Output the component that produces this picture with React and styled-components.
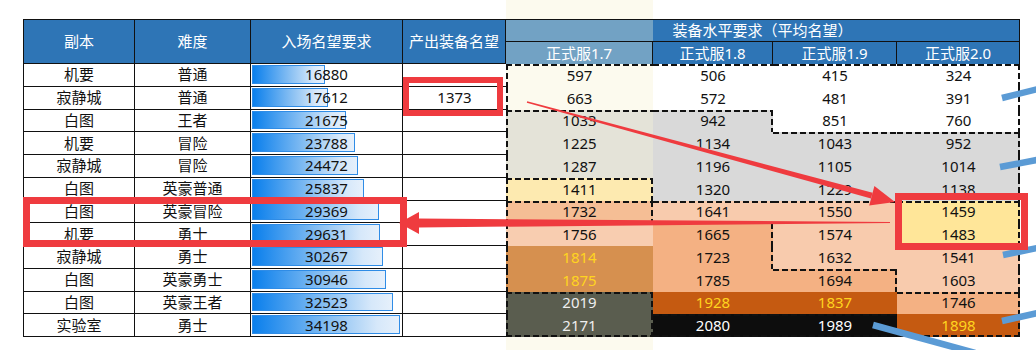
import React from 'react';
import styled, { createGlobalStyle, css } from 'styled-components';

const GlobalStyle = createGlobalStyle`
  body {
    margin: 0;
    background: #fff;
    font-family: "Noto Sans", "Noto Sans CJK SC", sans-serif;
  }
`

const Page = styled.div`
  position: relative;
  width: 1036px;
  height: 350px;
  overflow: hidden;
  background: linear-gradient(90deg, #fff 506px, #fcfaee 506px, #fcfaee 653px, #fff 653px);
`

const Sheet = styled.div`
  display: grid;
  grid-template-columns: 112px 116px 152px 103px 147px 120px 124px 123px;
  grid-template-rows: 23px 22px repeat(12, 22.75px);
  margin: 19px 0 0 23px;
  width: 997px;
  color: #111;
`

const Cell = styled.div`
  box-sizing: border-box;
  display: flex;
  align-items: center;
  justify-content: center;
  font-size: 15px;
  line-height: 1;
  white-space: nowrap;
`

const HeadCell = styled(Cell)`
  grid-row: span 2;
  background: #2e75b6;
  color: #fff;
  border: 1px solid #111;
  border-left-width: ${p => (p.$first ? '1px' : '0')};
`

const GroupHead = styled(Cell)`
  grid-column: span 4;
  color: #fff;
  background: linear-gradient(90deg, #72a2c4 147px, #2e75b6 147px);
  border-top: 1px solid #111;
  border-right: 1px solid #111;
  border-bottom: 1px solid #111;
`

const SubHead = styled(Cell)`
  color: #fff;
  background: ${p => p.$bg};
  border-right: 1px solid #111;
`

const LeftCell = styled(Cell)`
  background: #fff;
  border-bottom: 1px solid #111;
  border-right: ${p => (p.$last ? '0' : '1px solid #111')};
  border-left: ${p => (p.$first ? '1px solid #111' : '0')};
`

const BarCell = styled(LeftCell)`
  display: grid;
  grid-template-columns: 100%;
  grid-template-rows: 100%;
  justify-content: stretch;
  align-items: stretch;
  justify-items: center;
`

const Bar = styled.div`
  grid-area: 1 / 1;
  justify-self: start;
  box-sizing: border-box;
  margin: 1px 0 2px 1px;
  border: 1px solid #2f8ce6;
  background: linear-gradient(90deg, #0a7fec 0%, #8fc3f3 55%, #d6e8fa 85%, #e6f0fb 100%);
`

const BarText = styled.span`
  grid-area: 1 / 1;
  align-self: center;
`

const dashH = pos => `repeating-linear-gradient(90deg, #111 0 6px, transparent 6px 9px) ${pos} left / 100% 2px no-repeat`
const dashV = pos => `repeating-linear-gradient(180deg, #111 0 6px, transparent 6px 9px) top ${pos} / 2px 100% no-repeat`

const edgeLayers = e => {
  const l = []
  if (e.includes('t')) l.push(dashH('top'))
  if (e.includes('b')) l.push(dashH('bottom'))
  if (e.includes('l')) l.push(dashV('left'))
  if (e.includes('r')) l.push(dashV('right'))
  return l
}

const LevelCell = styled(Cell)`
  color: ${p => p.$fg};
  ${p => {
    const layers = edgeLayers(p.$edges)
    return css`
      background: ${[...layers, p.$bg].join(', ')};
    `
  }}
`

const colors = {
  W: '#ffffff', C: '#fcfaee', G: '#d9d9d9', GG: '#e4e3d8', LY: '#fdeab0',
  Y: '#ffe699', LP: '#f8cbad', P: '#f4b183', P0: '#f5be95', LP0: '#f8cdb0',
  OB: '#d6904f', DO: '#c55a11', OL: '#5a5d4f', K: '#0d0d0d',
}

const textColor = key => {
  if (key === 'OB' || key === 'DO') return '#ffd41f'
  if (key === 'OL') return '#eeeeee'
  if (key === 'K') return '#ffffff'
  return '#111'
}

const rows = [
  ['机要', '普通', 16880, '', [597, 506, 415, 324]],
  ['寂静城', '普通', 17612, '1373', [663, 572, 481, 391]],
  ['白图', '王者', 21675, '', [1033, 942, 851, 760]],
  ['机要', '冒险', 23788, '', [1225, 1134, 1043, 952]],
  ['寂静城', '冒险', 24472, '', [1287, 1196, 1105, 1014]],
  ['白图', '英豪普通', 25837, '', [1411, 1320, 1229, 1138]],
  ['白图', '英豪冒险', 29369, '', [1732, 1641, 1550, 1459]],
  ['机要', '勇士', 29631, '', [1756, 1665, 1574, 1483]],
  ['寂静城', '勇士', 30267, '', [1814, 1723, 1632, 1541]],
  ['白图', '英豪勇士', 30946, '', [1875, 1785, 1694, 1603]],
  ['白图', '英豪王者', 32523, '', [2019, 1928, 1837, 1746]],
  ['实验室', '勇士', 34198, '', [2171, 2080, 1989, 1898]],
]

const fills = [
  ['C', 'W', 'W', 'W'],
  ['C', 'W', 'W', 'W'],
  ['GG', 'G', 'W', 'W'],
  ['GG', 'G', 'G', 'G'],
  ['GG', 'G', 'G', 'G'],
  ['LY', 'G', 'G', 'G'],
  ['P0', 'LP', 'LP', 'Y'],
  ['LP0', 'P', 'LP', 'Y'],
  ['OB', 'P', 'LP', 'LP'],
  ['OB', 'P', 'P', 'LP'],
  ['OL', 'DO', 'DO', 'P'],
  ['OL', 'K', 'K', 'DO'],
]

// dashed outlines of the shaded zones
const edges = [
  ['t', 't', 't', 't'],
  ['', '', '', ''],
  ['t', 'tr', '', ''],
  ['', '', 't', 't'],
  ['', '', '', ''],
  ['tr', '', '', ''],
  ['tr', 't', 't', 't'],
  ['', 'r', '', ''],
  ['', 'r', '', ''],
  ['', '', 'tr', ''],
  ['tr', '', '', 't'],
  ['r', 't', 't', ''],
]

const edgeFor = (r, c) => {
  let e = edges[r][c]
  if (c === 0) e += 'l'
  if (c === 3) e += 'r'
  if (r === 11) e += 'b'
  return e
}

const MAX = 34198

const Overlay = () => (
  <svg
    width="1036"
    height="350"
    viewBox="0 0 1036 350"
    style={{ position: 'absolute', left: 0, top: 0, pointerEvents: 'none' }}
  >
    <g stroke="#5b9bd5" strokeWidth="6.5" strokeLinecap="butt">
      <line x1="1002" y1="98" x2="1042" y2="88" />
      <line x1="1000" y1="167" x2="1042" y2="159" />
      <line x1="1003" y1="255" x2="1042" y2="247" />
      <line x1="1002" y1="321" x2="1042" y2="312" />
      <line x1="873" y1="325" x2="975" y2="353" />
    </g>
    <g fill="none" stroke="#ef3b3f">
      <rect x="406" y="80" width="94" height="33" strokeWidth="6" />
      <rect x="26.5" y="200.5" width="377" height="43" strokeWidth="7" />
      <rect x="898.5" y="196.5" width="126" height="50" strokeWidth="7" />
    </g>
    <g fill="#ef3b3f">
      <polygon points="527.2,101.3 872.6,192.8 871,198.6 526.8,102.7" />
      <polygon points="874.4,186 895,202 869.2,205.4" />
      <polygon points="418,218.5 890,222 890,223 418,227.5" />
      <polygon points="419,212 399,223 419,234" />
    </g>
  </svg>
)

const App = () => {
  return (
    <Page>
      <GlobalStyle />
      <Sheet>
        <HeadCell $first>副本</HeadCell>
        <HeadCell>难度</HeadCell>
        <HeadCell>入场名望要求</HeadCell>
        <HeadCell>产出装备名望</HeadCell>
        <GroupHead>装备水平要求（平均名望）</GroupHead>
        <SubHead $bg="#72a2c4">正式服1.7</SubHead>
        <SubHead $bg="#2e75b6">正式服1.8</SubHead>
        <SubHead $bg="#2e75b6">正式服1.9</SubHead>
        <SubHead $bg="#2e75b6">正式服2.0</SubHead>
        {rows.map(([dungeon, level, need, gear, levels], r) => (
          <React.Fragment key={r}>
            <LeftCell $first>{dungeon}</LeftCell>
            <LeftCell>{level}</LeftCell>
            <BarCell>
              <Bar style={{ width: `${(need / MAX) * 148}px` }} />
              <BarText>{need}</BarText>
            </BarCell>
            <LeftCell $last>{gear}</LeftCell>
            {levels.map((v, c) => (
              <LevelCell
                key={c}
                $bg={colors[fills[r][c]]}
                $fg={textColor(fills[r][c])}
                $edges={edgeFor(r, c)}
              >
                {v}
              </LevelCell>
            ))}
          </React.Fragment>
        ))}
      </Sheet>
      <Overlay />
    </Page>
  )
}

export default App;
